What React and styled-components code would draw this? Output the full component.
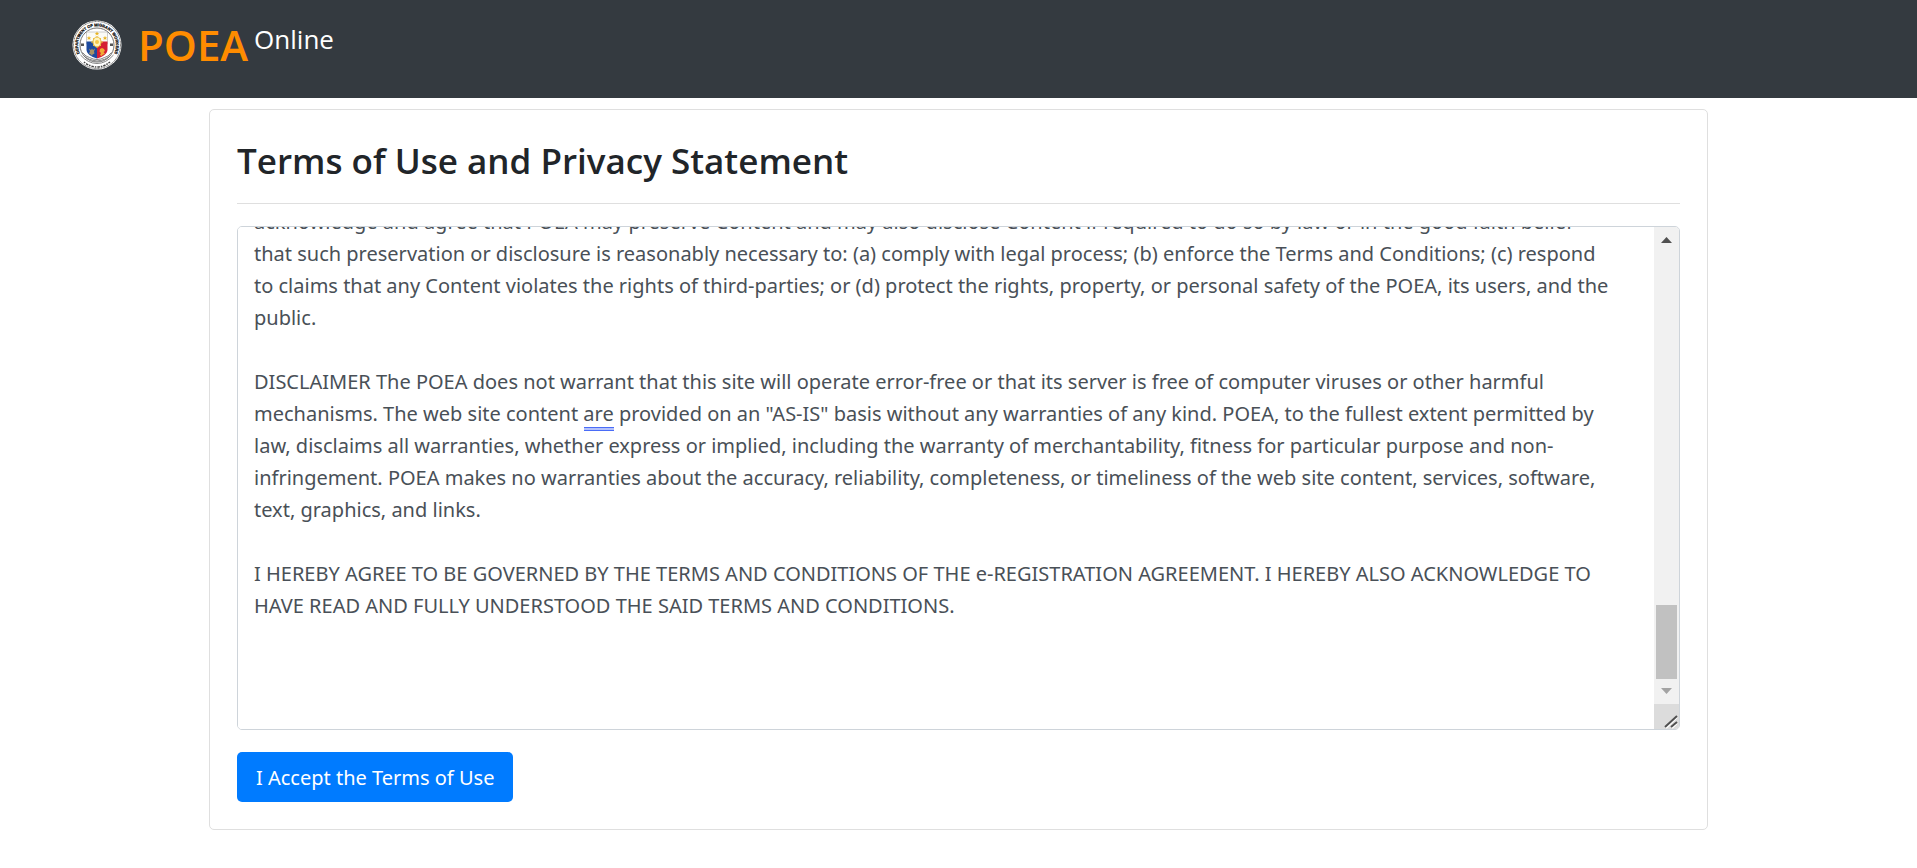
import React from 'react';
import styled, {createGlobalStyle, ThemeProvider} from 'styled-components';

const theme = {
  color: {
    white: '#ffffff',
    dark: '#343a40',
    orange: '#ff8c00',
    black: '#212529',
    gray: '#495057',
    border: '#dfdfdf',
    inputBorder: '#ced4da',
    blue: '#007bff',
  },
  fontSize: {
    m: '20px',
    l: '26px',
    xl: '35px',
    xxl: '42px',
  },
};

const GlobalStyle = createGlobalStyle`
  *, *::before, *::after {
    box-sizing: border-box;
  }
  body {
    margin: 0;
    background: #ffffff;
    font-family: 'Open Sans', 'Noto Sans', sans-serif;
  }
`;

const TERMS = [
  'acknowledge and agree that POEA may preserve Content and may also disclose Content if required to do so by law or in the good faith belief',
  'that such preservation or disclosure is reasonably necessary to: (a) comply with legal process; (b) enforce the Terms and Conditions; (c) respond',
  'to claims that any Content violates the rights of third-parties; or (d) protect the rights, property, or personal safety of the POEA, its users, and the',
  'public.',
  '',
  'DISCLAIMER The POEA does not warrant that this site will operate error-free or that its server is free of computer viruses or other harmful',
  'mechanisms. The web site content are provided on an "AS-IS" basis without any warranties of any kind. POEA, to the fullest extent permitted by',
  'law, disclaims all warranties, whether express or implied, including the warranty of merchantability, fitness for particular purpose and non-',
  'infringement. POEA makes no warranties about the accuracy, reliability, completeness, or timeliness of the web site content, services, software,',
  'text, graphics, and links.',
  '',
  'I HEREBY AGREE TO BE GOVERNED BY THE TERMS AND CONDITIONS OF THE e-REGISTRATION AGREEMENT. I HEREBY ALSO ACKNOWLEDGE TO',
  'HAVE READ AND FULLY UNDERSTOOD THE SAID TERMS AND CONDITIONS.',
  '',
  '',
  '',
];

const Navbar = styled.header`
  display: flex;
  align-items: flex-start;
  height: 98px;
  padding: 20px 72px;
  background: ${({theme}) => theme.color.dark};
`;

const Brand = styled.a`
  display: flex;
  align-items: flex-start;
  color: ${({theme}) => theme.color.white};
  text-decoration: none;
`;

const Logo = styled.svg`
  display: block;
  width: 50px;
  height: 50px;
  margin-right: 16px;
`;

const BrandName = styled.span`
  margin-right: 6px;
  font-size: ${({theme}) => theme.fontSize.xxl};
  font-weight: 600;
  line-height: 50px;
  color: ${({theme}) => theme.color.orange};
`;

const BrandSuffix = styled.span`
  font-size: ${({theme}) => theme.fontSize.l};
  line-height: 38px;
`;

const Card = styled.main`
  max-width: 1499px;
  margin: 11px auto;
  padding: 27px;
  border: 1px solid ${({theme}) => theme.color.border};
  border-radius: 5px;
`;

const Title = styled.h1`
  margin: 0;
  padding-bottom: 18px;
  border-bottom: 1px solid ${({theme}) => theme.color.border};
  font-size: ${({theme}) => theme.fontSize.xl};
  font-weight: 600;
  line-height: 48px;
  color: ${({theme}) => theme.color.black};
`;

const TermsWrapper = styled.div`
  position: relative;
  display: flex;
  margin: 22px 0;
  border: 1px solid ${({theme}) => theme.color.inputBorder};
  border-radius: 5px;
  overflow: hidden;
`;

const TermsBox = styled.textarea`
  display: block;
  flex: 1;
  min-width: 0;
  height: 502px;
  padding: 11px 16px;
  border: 0;
  outline: none;
  font-family: 'Noto Sans', 'Open Sans', sans-serif;
  font-size: ${({theme}) => theme.fontSize.m};
  line-height: 32px;
  white-space: pre;
  overflow-x: hidden;
  overflow-y: scroll;
  resize: none;
  color: ${({theme}) => theme.color.gray};
  background: ${({theme}) => theme.color.white};

  &::-webkit-scrollbar {
    display: none;
  }
`;

const ScrollBar = styled.div`
  display: flex;
  flex-direction: column;
  width: 25px;
  background: #f1f1f1;
`;

const ScrollIcon = styled.svg`
  display: block;
  width: 25px;
  height: 25px;
  background: ${({$corner}) => $corner ? '#dcdcdc' : 'none'};
`;

const ScrollTrack = styled.div`
  display: flex;
  flex: 1;
  align-items: flex-end;
  padding: 0 2px;
`;

const ScrollThumb = styled.div`
  width: 100%;
  height: 74px;
  background: #c1c1c1;
`;

// double line of the grammar checker, lies over the text
const GrammarMark = styled.span`
  position: absolute;
  top: 200px;
  left: 346px;
  width: 30px;
  height: 4px;
  border: solid #4a6cf7;
  border-width: 1px 0;
  background: #b3c1fc;
  pointer-events: none;
`;

const AcceptButton = styled.button`
  display: block;
  height: 50px;
  padding: 0 19px;
  border: 0;
  border-radius: 5px;
  font-family: 'Noto Sans', 'Open Sans', sans-serif;
  font-size: ${({theme}) => theme.fontSize.m};
  color: ${({theme}) => theme.color.white};
  background: ${({theme}) => theme.color.blue};
  cursor: pointer;
`;

const SealText = styled.text`
  font-family: 'Liberation Sans', sans-serif;
  font-size: 8px;
  font-weight: 700;
  fill: #111111;
  stroke: #111111;
  stroke-width: 0.5;
`;

const Seal = () => (
  <Logo viewBox="0 0 100 100" aria-hidden="true">
    <defs>
      <path id="seal-ring" d="M16 67.700A38 38 0 1 1 84 67.700" />
    </defs>
    <circle cx="50" cy="50" r="49" fill="#ffffff" />
    <circle cx="50" cy="50" r="47" fill="none" stroke="#222222" strokeWidth="1.4" strokeDasharray="2 1" />
    <SealText textAnchor="middle">
      <textPath href="#seal-ring" startOffset="50%">DEPARTMENT OF MIGRANT WORKERS</textPath>
    </SealText>
    <circle cx="50" cy="50" r="34" fill="#ffffff" stroke="#333333" strokeWidth="1.4" />
    <path d="M29 24H71V48H29Z" fill="#fbfbf6" stroke="#999999" strokeWidth="1" />
    <path d="M29 43H50V77C38 73 29 68 29 59Z" fill="#1c4a9f" />
    <path d="M71 43H50V77C62 73 71 68 71 59Z" fill="#d51f34" />
    <path d="M50 32V56M38 44H62M42 36L58 52M58 36L42 52" stroke="#f0c040" strokeWidth="2" />
    <ellipse cx="50" cy="44" rx="8" ry="10" fill="#fff3bd" stroke="#e6b93c" strokeWidth="2" />
    <circle cx="50" cy="44" r="4" fill="#f5c84b" />
    <path d="M50 23l1.500 3h3l-2.500 2 1 3-3-2-3 2 1-3-2.500-2h3zM34 32l1.500 3h3l-2.500 2 1 3-3-2-3 2 1-3-2.500-2h3zM66 32l1.500 3h3l-2.500 2 1 3-3-2-3 2 1-3-2.500-2h3z" fill="#e8b322" />
    <path d="M34 57l4 3 2-3 2 3 4-3-2 6 1 4-4 2-1 3-2-3-4-2 2-4z" fill="#a79265" />
    <path d="M56 58l4-2 4 2 2 4-3 2 3 4-4 1-3 3-3-2 2-4-3-3z" fill="#f0ab35" />
    <path d="M18 47h6v5h-6zM76 47h6v5h-6z" fill="#555555" />
    <path d="M21 65Q28 74 35 75Q50 83 65 75Q72 74 79 65M23 71Q32 80 50 82Q68 80 77 71M17 70Q32 87 50 87Q68 87 83 70" fill="none" stroke="#777777" strokeWidth="1.800" />
    <path d="M24 84Q36 94 50 94Q64 94 76 84" fill="none" stroke="#444444" strokeWidth="3" strokeDasharray="3 2 5 2" />
  </Logo>
);

class App extends React.Component {

  termsRef = React.createRef();

  componentDidMount() {
    const box = this.termsRef.current;
    box.scrollTop = box.scrollHeight;
  }

  render() {
    return (
      <ThemeProvider theme={theme}>
        <GlobalStyle />
        <Navbar>
          <Brand href="#">
            <Seal />
            <BrandName>POEA</BrandName>
            <BrandSuffix>Online</BrandSuffix>
          </Brand>
        </Navbar>
        <Card>
          <Title id="terms-title">Terms of Use and Privacy Statement</Title>
          <TermsWrapper>
            <TermsBox
              ref={this.termsRef}
              aria-labelledby="terms-title"
              spellCheck={false}
              readOnly
              value={TERMS.join('\n')}
            />
            <ScrollBar aria-hidden="true">
              <ScrollIcon viewBox="0 0 25 25">
                <path d="M7 16L12.500 10L18 16Z" fill="#505050" />
              </ScrollIcon>
              <ScrollTrack>
                <ScrollThumb />
              </ScrollTrack>
              <ScrollIcon viewBox="0 0 25 25">
                <path d="M7 9L12.500 15L18 9Z" fill="#a3a3a3" />
              </ScrollIcon>
              <ScrollIcon viewBox="0 0 25 25" $corner>
                <path d="M12 24L23 13M18 24L23 19" stroke="#ffffff" strokeWidth="2" />
                <path d="M11 23L23 12M17 23L23 18" stroke="#505050" strokeWidth="2" />
              </ScrollIcon>
            </ScrollBar>
            <GrammarMark />
          </TermsWrapper>
          <AcceptButton type="button">I Accept the Terms of Use</AcceptButton>
        </Card>
      </ThemeProvider>
    )
  }
}

export default App;
